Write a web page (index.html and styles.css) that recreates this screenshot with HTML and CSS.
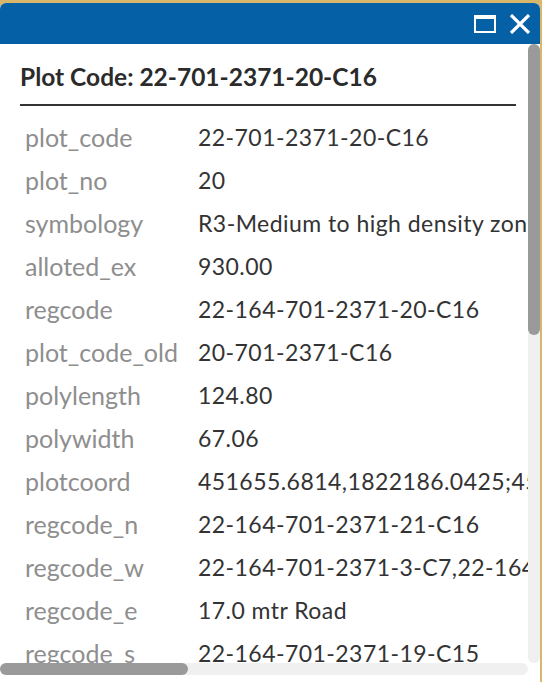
FILE: index.html
```html
<!DOCTYPE html>
<html lang="en">
<head>
<meta charset="utf-8">
<title>Plot Code popup</title>
<link rel="stylesheet" href="styles.css">
</head>
<body>
<div class="panel">
  <div class="header">
    <button class="hbtn" aria-label="Maximize">
      <svg width="22" height="20" viewBox="0 0 22 20"><rect x="1" y="2" width="20" height="16" fill="none" stroke="#fff" stroke-width="2"/><rect x="1" y="1" width="20" height="4" fill="#fff"/></svg>
    </button>
    <button class="hbtn" aria-label="Close">
      <svg width="22" height="20" viewBox="0 0 22 20"><path d="M2 1 L20 19 M20 1 L2 19" stroke="#fff" stroke-width="3.2" fill="none"/></svg>
    </button>
  </div>
  <div class="body">
    <div class="viewport">
      <div class="content">
        <h2 class="title">Plot Code: 22-701-2371-20-C16</h2>
        <table class="attrs">
          <tr><td class="k">plot_code</td><td class="v">22-701-2371-20-C16</td></tr>
          <tr><td class="k">plot_no</td><td class="v">20</td></tr>
          <tr><td class="k">symbology</td><td class="v">R3-Medium to high density zone</td></tr>
          <tr><td class="k">alloted_ex</td><td class="v">930.00</td></tr>
          <tr><td class="k">regcode</td><td class="v">22-164-701-2371-20-C16</td></tr>
          <tr><td class="k">plot_code_old</td><td class="v">20-701-2371-C16</td></tr>
          <tr><td class="k">polylength</td><td class="v">124.80</td></tr>
          <tr><td class="k">polywidth</td><td class="v">67.06</td></tr>
          <tr><td class="k">plotcoord</td><td class="v">451655.6814,1822186.0425;451703.2271,1822201.5518;451724.0913,1822137.9962</td></tr>
          <tr><td class="k">regcode_n</td><td class="v">22-164-701-2371-21-C16</td></tr>
          <tr><td class="k">regcode_w</td><td class="v">22-164-701-2371-3-C7,22-164-701-2371-4-C7</td></tr>
          <tr><td class="k">regcode_e</td><td class="v">17.0 mtr Road</td></tr>
          <tr><td class="k">regcode_s</td><td class="v">22-164-701-2371-19-C15</td></tr>
          <tr><td class="k">zone</td><td class="v">R3</td></tr>
        </table>
      </div>
    </div>
    <div class="vbar"><div class="vthumb"></div></div>
    <div class="hbar"><div class="hthumb"></div></div>
    <div class="corner"></div>
  </div>
</div>
</body>
</html>
```

FILE: styles.css
```css
html, body {
  margin: 0;
  padding: 0;
}
body {
  background: #d8b76a;
  width: 542px;
  height: 682px;
  overflow: hidden;
  font-family: Lato, "Noto Sans", sans-serif;
}
.panel {
  margin-top: 3px;
  width: 540px;
  height: 679px;
  background: #fff;
  border-radius: 6px 6px 0 0;
  overflow: hidden;
  display: flex;
  flex-direction: column;
  padding-bottom: 7px;
  box-sizing: border-box;
}
.header {
  height: 41px;
  flex: none;
  background: #0560a6;
  display: flex;
  justify-content: flex-end;
  align-items: center;
  gap: 13px;
  padding-right: 9px;
}
.hbtn {
  border: 0;
  background: none;
  padding: 0;
  margin: 0;
  width: 22px;
  height: 20px;
  display: flex;
}
.body {
  flex: 1;
  min-height: 0;
  display: grid;
  grid-template-columns: 528px 12px;
  grid-template-rows: 619px 12px;
}
.viewport {
  overflow: hidden;
  min-width: 0;
  min-height: 0;
}
.vbar {
  background: #f0f0f0;
  border-radius: 6px;
  display: flex;
  flex-direction: column;
}
.vthumb {
  height: 291px;
  background: #9a9a9a;
  border-radius: 6px;
}
.hbar {
  background: #f0f0f0;
  border-radius: 6px;
  display: flex;
}
.hthumb {
  width: 188px;
  background: #9a9a9a;
  border-radius: 6px;
}
.corner {
  background: #fff;
}
.content {
  width: 1519px;
  padding: 17px 0 20px 20px;
  box-sizing: border-box;
}
.title {
  margin: 0;
  width: 496px;
  font-size: 24.5px;
  font-weight: 700;
  color: #2b2b2b;
  line-height: 32px;
  padding-bottom: 11px;
  border-bottom: 2px solid #333;
}
.attrs {
  border-collapse: collapse;
  margin-top: 9px;
  white-space: nowrap;
}
.attrs td {
  height: 43px;
  padding: 0 5px;
  vertical-align: middle;
}
.attrs .k {
  width: 163px;
  font-size: 25px;
  color: #8e8e8e;
}
.attrs .v {
  font-size: 23px;
  letter-spacing: 0.45px;
  color: #333;
}
```
